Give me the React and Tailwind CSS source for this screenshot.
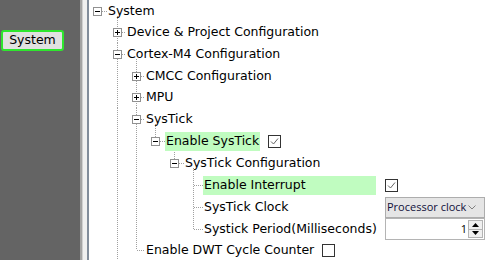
import React from "react";

const FONT = { fontFamily: '"DejaVu Sans", Verdana, sans-serif' };
const UIFONT = { fontFamily: '"Open Sans", "Noto Sans", sans-serif' };

const CELLS = [
  { w: 18, lx: 8 },
  { w: 19, lx: 10 },
  { w: 19, lx: 10 },
  { w: 20, lx: 10 },
  { w: 19, lx: 9 },
  { w: 19, lx: 9 },
];

const LINE = "#a0a0a0";

function Cell({ idx, h, type, box }) {
  const { w, lx } = CELLS[idx];
  const cy = Math.floor(h / 2);
  const x = lx + 0.5;
  const y = cy + 0.5;
  return (
    <svg width={w} height={h} className="block shrink-0">
      {(type === "v" || type === "tee") && (
        <line x1={x} y1={0} x2={x} y2={h} stroke={LINE} strokeDasharray="1 1" />
      )}
      {type === "elbow" && (
        <line x1={x} y1={0} x2={x} y2={cy} stroke={LINE} strokeDasharray="1 1" />
      )}
      {type !== "v" && type !== "" && (
        <line x1={box ? lx + 5 : lx + 1} y1={y} x2={w} y2={y} stroke={LINE} strokeDasharray="1 1" />
      )}
      {box && (
        <g>
          <rect x={lx - 4 + 0.5} y={cy - 4 + 0.5} width={8} height={8} fill="#fff" stroke="#919191" />
          <line x1={lx - 2} y1={y} x2={lx + 3} y2={y} stroke="#000" />
          {box === "plus" && <line x1={x} y1={cy - 2} x2={x} y2={cy + 3} stroke="#000" />}
        </g>
      )}
    </svg>
  );
}

function Checkbox() {
  return (
    <svg width="13" height="13" className="block shrink-0">
      <rect x="0.5" y="0.5" width="12" height="12" fill="#fff" stroke="#333" />
      <polyline points="3,6.5 5.5,9 10,3.5" fill="none" stroke="#666" strokeWidth="1" />
    </svg>
  );
}

function EmptyBox() {
  return (
    <svg width="13" height="13" className="block shrink-0">
      <rect x="0.5" y="0.5" width="12" height="12" fill="#fff" stroke="#333" />
    </svg>
  );
}

function Dropdown() {
  return (
    <div
      className="flex h-[21px] w-[100px] items-center border border-[#adadad] bg-[#e5e5e5] pl-[1px] pr-[8px] text-[11px] text-[#10103a]"
      style={UIFONT}
    >
      <span className="flex-1 whitespace-nowrap">Processor clock</span>
      <svg width="8" height="5" className="block">
        <polyline points="0.5,0.5 4,4 7.5,0.5" fill="none" stroke="#808080" />
      </svg>
    </div>
  );
}

function Spinner() {
  return (
    <div className="flex h-[22px] w-[100px] items-center border border-[#b4b4b4] bg-white pr-[1px]">
      <span className="flex-1 pr-[1px] text-right text-[11px] text-black" style={UIFONT}>
        1
      </span>
      <div className="flex h-[18px] w-[15px] flex-col border border-[#b4b4b4]">
        <div className="flex flex-1 items-center justify-center border-b border-[#b4b4b4] bg-[#f0f0f0]">
          <svg width="7" height="4" className="block">
            <polygon points="0,4 3.5,0 7,4" fill="#000" />
          </svg>
        </div>
        <div className="flex flex-1 items-center justify-center bg-[#f0f0f0]">
          <svg width="7" height="4" className="block">
            <polygon points="0,0 3.5,4 7,0" fill="#000" />
          </svg>
        </div>
      </div>
    </div>
  );
}

const ROWS = [
  { d: 0, h: 22, label: "System", anc: [], conn: "root", box: "minus", open: true },
  { d: 1, h: 21, label: "Device & Project Configuration", anc: [""], conn: "tee", box: "plus" },
  { d: 1, h: 22, label: "Cortex-M4 Configuration", anc: [""], conn: "tee", box: "minus", open: true },
  { d: 2, h: 22, label: "CMCC Configuration", anc: ["", "v"], conn: "tee", box: "plus" },
  { d: 2, h: 21, label: "MPU", anc: ["", "v"], conn: "tee", box: "plus" },
  { d: 2, h: 22, label: "SysTick", anc: ["", "v"], conn: "tee", box: "minus", open: true },
  { d: 3, h: 22, label: "Enable SysTick", anc: ["", "v", "v"], conn: "elbow", box: "minus", open: true, hl: true, value: "check", gap: "ml-[8px]" },
  { d: 4, h: 22, label: "SysTick Configuration", anc: ["", "v", "v", ""], conn: "elbow", box: "minus", open: true },
  { d: 5, h: 22, label: "Enable Interrupt", anc: ["", "v", "v", "", ""], conn: "tee", hl: true, fixed: true, value: "check", gap: "ml-[9px]" },
  { d: 5, h: 22, label: "SysTick Clock", anc: ["", "v", "v", "", ""], conn: "tee", fixed: true, value: "dropdown", gap: "ml-[9px]" },
  { d: 5, h: 22, label: "Systick Period(Milliseconds)", anc: ["", "v", "v", "", ""], conn: "elbow", fixed: true, value: "spinner", gap: "ml-[9px]" },
  { d: 2, h: 21, label: "Enable DWT Cycle Counter", anc: ["", "v"], conn: "elbow", value: "empty", gap: "ml-[7px]" },
];

function Row({ row }) {
  const hClass = row.h === 22 ? "h-[22px]" : "h-[21px]";
  const cy = Math.floor(row.h / 2);
  let childX = 0;
  for (let i = 0; i <= row.d; i++) childX += CELLS[i].w;
  if (row.open) childX += CELLS[row.d + 1].lx;
  return (
    <div className={`relative flex ${hClass} shrink-0 items-center`}>
      {row.open && (
        <svg
          width="1"
          height={row.h - cy - 5}
          className="absolute block"
          style={{ left: childX, top: cy + 5 }}
        >
          <line x1="0.5" y1="0" x2="0.5" y2={row.h} stroke={LINE} strokeDasharray="1 1" />
        </svg>
      )}
      {row.anc.map((t, i) => (
        <Cell key={i} idx={i} h={row.h} type={t} />
      ))}
      <Cell idx={row.d} h={row.h} type={row.conn} box={row.box} />
      <div
        className={`relative flex h-[19px] items-center whitespace-nowrap px-[1px] text-[12.5px] text-black ${
          row.hl ? "bg-[#c0fcc0]" : ""
        } ${row.fixed ? "w-[173px] shrink-0" : ""}`}
      >
        {row.label}
      </div>
      {row.value && (
        <div className={row.gap}>
          {row.value === "check" && <Checkbox />}
          {row.value === "empty" && <EmptyBox />}
          {row.value === "dropdown" && <Dropdown />}
          {row.value === "spinner" && <Spinner />}
        </div>
      )}
    </div>
  );
}

export default function App() {
  return (
    <div className="flex h-[260px] w-[504px] overflow-hidden bg-white" style={FONT}>
      <div className="w-[80px] shrink-0 bg-[#646464] pl-[1px] pt-[30px]">
        <div className="flex h-[21px] w-[63px] items-center justify-center rounded-[3px] border-2 border-[#2ee62e] bg-[#e1e1e1] text-[12.5px] text-black">
          System
        </div>
      </div>
      <div className="w-[2px] shrink-0 bg-[#a3a3a3]" />
      <div className="w-[1px] shrink-0 bg-[#d0d0d0]" />
      <div className="w-[4px] shrink-0 bg-[#f0f0f0]" />
      <div className="w-[2px] shrink-0 bg-[#828d9b]" />
      <div className="flex min-w-0 flex-1 flex-col">
        {ROWS.map((r, i) => (
          <Row key={i} row={r} />
        ))}
      </div>
    </div>
  );
}
